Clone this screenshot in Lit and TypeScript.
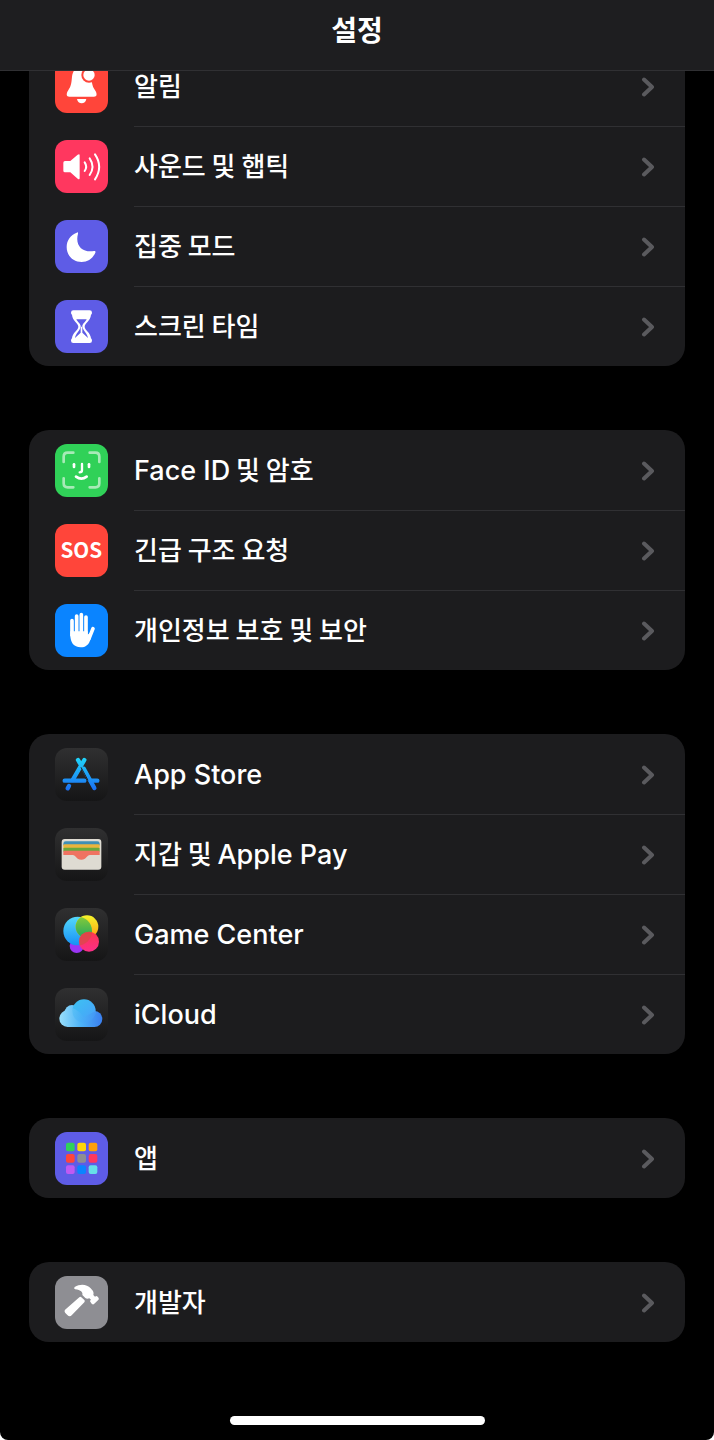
import { LitElement, html, css, svg } from "lit";
import { customElement } from "lit/decorators.js";

const icons: Record<string, unknown> = {
  bell: svg`
    <path fill="#fff" d="M80 20C61 20 53 34 51 50C49 72 48 78 39 92C33 101 34 110 43 110H117C126 110 127 101 121 92C112 78 111 72 109 50C107 34 99 20 80 20Z"/>
    <path fill="#fff" d="M66 117H94Q91 130 80 130Q69 130 66 117Z"/>
    <circle cx="102" cy="45" r="23" fill="#ff453a"/><circle cx="102" cy="45" r="17" fill="#fff"/>`,
  sound: svg`
    <path fill="#fff" d="M30 63H46L68 44Q74 40 74 46V114Q74 120 68 116L46 97H30Q25 97 25 92V68Q25 63 30 63Z"/>
    <g fill="none" stroke="#fff" stroke-width="6" stroke-linecap="round">
      <path d="M89 67Q98 80 89 93"/><path d="M104 55Q121 80 104 105"/><path d="M120 43Q145 80 120 118"/>
    </g>`,
  moon: svg`<path fill="#fff" d="M65 38Q70 35 69 41C59 78 84 99 117 93Q123 92 121 98C113 116 98 126 80 126C54 126 35 107 35 81C35 61 47 44 65 38Z"/>`,
  hourglass: svg`
    <path fill="#fff" d="M55 31H104Q111 31 111 38Q111 42 108 44C107 62 89 70 89 80C89 90 107 98 108 115Q111 118 111 122Q111 129 104 129H55Q48 129 48 122Q48 118 51 115C52 98 70 90 70 80C70 70 52 62 51 44Q48 42 48 38Q48 31 55 31Z"/>
    <path fill="#5e5ce6" d="M64 58H95C92 66 82 71 82 79V98L99 114C97 98 83 92 83 80H76C76 92 62 98 60 114L77 98V79C77 71 67 66 64 58Z"/>`,
  face: svg`
    <g fill="none" stroke="#fff" stroke-linecap="round">
      <g stroke="#a7eab7" stroke-width="8">
        <path d="M26 54V38Q26 26 38 26H55"/><path d="M104 26H121Q133 26 133 38V54"/>
        <path d="M133 103V118Q133 130 121 130H104"/><path d="M55 130H38Q26 130 26 118V103"/>
      </g>
      <g stroke-width="8"><path d="M57 61V69"/><path d="M102 61V69"/><path d="M81 60V79Q81 85 74 85" stroke-width="7"/><path d="M63 98Q79 110 95 98"/></g>
    </g>`,
  sos: svg`<text class="sos" x="79" y="102" text-anchor="middle">SOS</text>`,
  hand: svg`
    <g fill="none" stroke="#fff" stroke-width="11" stroke-linecap="round">
      <path d="M51 50V94"/><path d="M65 36V94"/><path d="M79 32V94"/><path d="M93 39V94"/><path d="M114 74L102 104"/>
    </g>
    <path fill="#fff" d="M46 82H98V92L108 84L107 104C102 122 92 130 77 130C56 130 46 115 46 94Z"/>`,
  store: svg`
    <defs><linearGradient id="g" x1="0" y1="30" x2="0" y2="128" gradientUnits="userSpaceOnUse"><stop stop-color="#20d5fa"/><stop offset="1" stop-color="#1b6df3"/></linearGradient></defs>
    <g fill="none" stroke="url(#g)" stroke-width="13" stroke-linecap="round">
      <path d="M88 36L53 96"/><path d="M69 36L75 46"/><path d="M29 98H88"/><path d="M86 62L118 120"/><path d="M110 98H127"/><path d="M42 114L38 121"/>
    </g>
    <path d="M78 58L99 97" stroke="#202021" stroke-width="3"/>`,
  wallet: svg`
    <rect x="20" y="33" width="119" height="92" rx="9" fill="#dedbd2"/>
    <path fill="#3f8fb5" d="M25 47Q25 40 32 40H127Q134 40 134 47V52H25Z"/>
    <path fill="#eab43c" d="M25 52Q25 49 29 49H130Q134 49 134 52V62H25Z"/>
    <path fill="#68a83d" d="M25 62Q25 59 29 59H130Q134 59 134 62V71H25Z"/>
    <path fill="#ef7361" d="M25 71Q25 68 29 68H130Q134 68 134 71V81H105C95 81 95 95 79 95C63 95 63 81 53 81H25Z"/>`,
  game: svg`
    <defs>
      <linearGradient id="b" x2="0" y2="1"><stop stop-color="#54d8fb"/><stop offset="1" stop-color="#1790f5"/></linearGradient>
      <linearGradient id="y" x2="0" y2="1"><stop stop-color="#f5f52b"/><stop offset="1" stop-color="#ff9d13"/></linearGradient>
      <linearGradient id="r" x2="0" y2="1"><stop stop-color="#fb374f"/><stop offset="1" stop-color="#fc2e88"/></linearGradient>
      <linearGradient id="e" x2="0" y2="1"><stop stop-color="#8ccc37"/><stop offset="1" stop-color="#22a85d"/></linearGradient>
      <clipPath id="c"><circle cx="68" cy="69" r="43"/></clipPath>
    </defs>
    <circle cx="65" cy="114" r="21" fill="#9b35f5"/>
    <circle cx="68" cy="69" r="43" fill="url(#b)"/>
    <circle cx="96" cy="56" r="34" fill="url(#y)"/>
    <circle cx="96" cy="56" r="34" fill="url(#e)" clip-path="url(#c)"/>
    <circle cx="102" cy="101" r="30" fill="url(#r)"/>
    <circle cx="102" cy="101" r="30" fill="#d0503f" fill-opacity=".6" clip-path="url(#c)"/>`,
  cloud: svg`
    <defs>
      <linearGradient id="l" x1="13" x2="142" y1="0" y2="0" gradientUnits="userSpaceOnUse"><stop stop-color="#9adffa"/><stop offset=".5" stop-color="#4db3f7"/><stop offset="1" stop-color="#3a7ff0"/></linearGradient>
      <linearGradient id="m" x2="1" y2="1"><stop stop-color="#3cc3f2"/><stop offset="1" stop-color="#4a9efa"/></linearGradient>
    </defs>
    <g fill="url(#l)"><circle cx="38" cy="92" r="25"/><circle cx="51" cy="73" r="22"/><circle cx="118" cy="93" r="24"/><rect x="38" y="80" width="80" height="37"/></g>
    <circle cx="87" cy="69" r="35" fill="url(#m)"/>
    <path fill="url(#l)" fill-opacity=".6" d="M52 60Q74 68 86 88L120 70V117H38Z"/>`,
  apps: svg`${[
    ["#30d158", "#ffd60a", "#ff9f0a"],
    ["#ff453a", "#8e8e93", "#ff375f"],
    ["#bf5af2", "#0a84ff", "#66e0e8"],
  ].map((r, i) => r.map((c, j) => svg`<rect x=${33 + j * 34} y=${32 + i * 34} width="26" height="26" rx="6" fill=${c}/>`))}`,
  hammer: svg`
    <path fill="#fff" d="M73 64Q76 61 79 64L88 72Q91 75 88 79L50 118Q44 124 37 117L31 111Q26 105 32 100Z"/>
    <path fill="#fff" d="M59 33C76 23 96 25 107 37L114 45Q117 51 115 57L120 62L124 60Q127 60 131 66Q133 70 129 73L117 84Q114 87 110 83L105 76Q105 73 108 71L103 67Q96 70 91 66L82 57C84 49 78 42 60 40Q55 37 59 33Z"/>`,
};

interface Row { icon: string; tone: string; label: string; }

const groups: Row[][] = [
  [
    { icon: "bell", tone: "red", label: "알림" },
    { icon: "sound", tone: "pink", label: "사운드 및 햅틱" },
    { icon: "moon", tone: "indigo", label: "집중 모드" },
    { icon: "hourglass", tone: "indigo", label: "스크린 타임" },
  ],
  [
    { icon: "face", tone: "green", label: "Face ID 및 암호" },
    { icon: "sos", tone: "red", label: "긴급 구조 요청" },
    { icon: "hand", tone: "blue", label: "개인정보 보호 및 보안" },
  ],
  [
    { icon: "store", tone: "dark", label: "App Store" },
    { icon: "wallet", tone: "dark", label: "지갑 및 Apple Pay" },
    { icon: "game", tone: "dark", label: "Game Center" },
    { icon: "cloud", tone: "dark", label: "iCloud" },
  ],
  [{ icon: "apps", tone: "indigo", label: "앱" }],
  [{ icon: "hammer", tone: "gray", label: "개발자" }],
];

// Hangul runs are set slightly smaller than the Latin words beside them.
const labelParts = (label: string) =>
  label
    .split(/([A-Za-z]+(?: [A-Za-z]+)*)/)
    .filter(Boolean)
    .map((part) => (/[A-Za-z]/.test(part) ? part : html`<span class="hangul">${part}</span>`));

@customElement("settings-row")
export class SettingsRow extends LitElement {
  static properties = { row: { attribute: false } };
  declare row: Row;

  static styles = css`
    :host { display: block; }
    .row { display: flex; padding-left: 26px; gap: 26px; color: #fff; text-decoration: none; }
    .icon { flex: none; width: 53px; height: 53px; margin: 14px 0 13px; border-radius: 12px; overflow: hidden; }
    .glyph { display: block; width: 100%; height: 100%; }
    .red { background: #ff453a; }
    .pink { background: #ff375f; }
    .indigo { background: #5e5ce6; }
    .green { background: #30d158; }
    .blue { background: #0a84ff; }
    .gray { background: #8e8e93; }
    .dark { background: linear-gradient(#303031, #151516); }
    .body { flex: 1; display: flex; align-items: center; justify-content: space-between; padding-right: 30px; border-top: 1px solid var(--separator, #303033); }
    .label { font-family: Inter, sans-serif; font-size: 27px; line-height: 32px; font-weight: 500; }
    .hangul { font-family: "Noto Sans CJK KR", sans-serif; font-size: 26px; line-height: 1; }
    .chevron { width: 14px; height: 20px; }
    .sos { font: 700 62px "Noto Sans CJK KR", sans-serif; fill: #fff; }
  `;

  render() {
    return html`<a class="row" href="#${this.row.icon}">
      <span class="icon ${this.row.tone}"><svg class="glyph" viewBox="0 0 159 159" aria-hidden="true">${icons[this.row.icon]}</svg></span>
      <span class="body">
        <span class="label">${labelParts(this.row.label)}</span>
        <svg class="chevron" viewBox="0 0 14 20" aria-hidden="true"><path d="M3 2.5L11 10L3 17.5" fill="none" stroke="#5a5a5e" stroke-width="4" stroke-linecap="round" stroke-linejoin="round"/></svg>
      </span>
    </a>`;
  }
}

@customElement("app-root")
export class AppRoot extends LitElement {
  static styles = css`
    :host {
      display: flex; flex-direction: column; min-height: 100vh; overflow: hidden;
      background: #000; color: #fff; border-radius: 0 0 8px 8px;
      font-family: "Noto Sans CJK KR", sans-serif;
    }
    .bar { position: sticky; top: 0; z-index: 1; box-sizing: border-box; height: 71px; padding-top: 11px; background: #1e1e20; border-bottom: 1px solid #303033; text-align: center; }
    .title { margin: 0; font-size: 28px; line-height: 36px; font-weight: 700; }
    .list { display: flex; flex-direction: column; gap: 64px; padding: 0 29px; margin-top: -25px; }
    .card { background: #1c1c1e; border-radius: 20px; overflow: hidden; }
    .first { --separator: transparent; }
    .foot { display: flex; justify-content: center; margin-top: auto; padding-bottom: 15px; }
    .home { width: 255px; height: 9px; border-radius: 5px; background: #fff; }
  `;

  render() {
    return html`
      <header class="bar"><h1 class="title">설정</h1></header>
      <main class="list">
        ${groups.map((g) => html`<section class="card">
          ${g.map((r, i) => html`<settings-row class=${i ? "" : "first"} .row=${r}></settings-row>`)}
        </section>`)}
      </main>
      <footer class="foot"><div class="home"></div></footer>`;
  }
}
